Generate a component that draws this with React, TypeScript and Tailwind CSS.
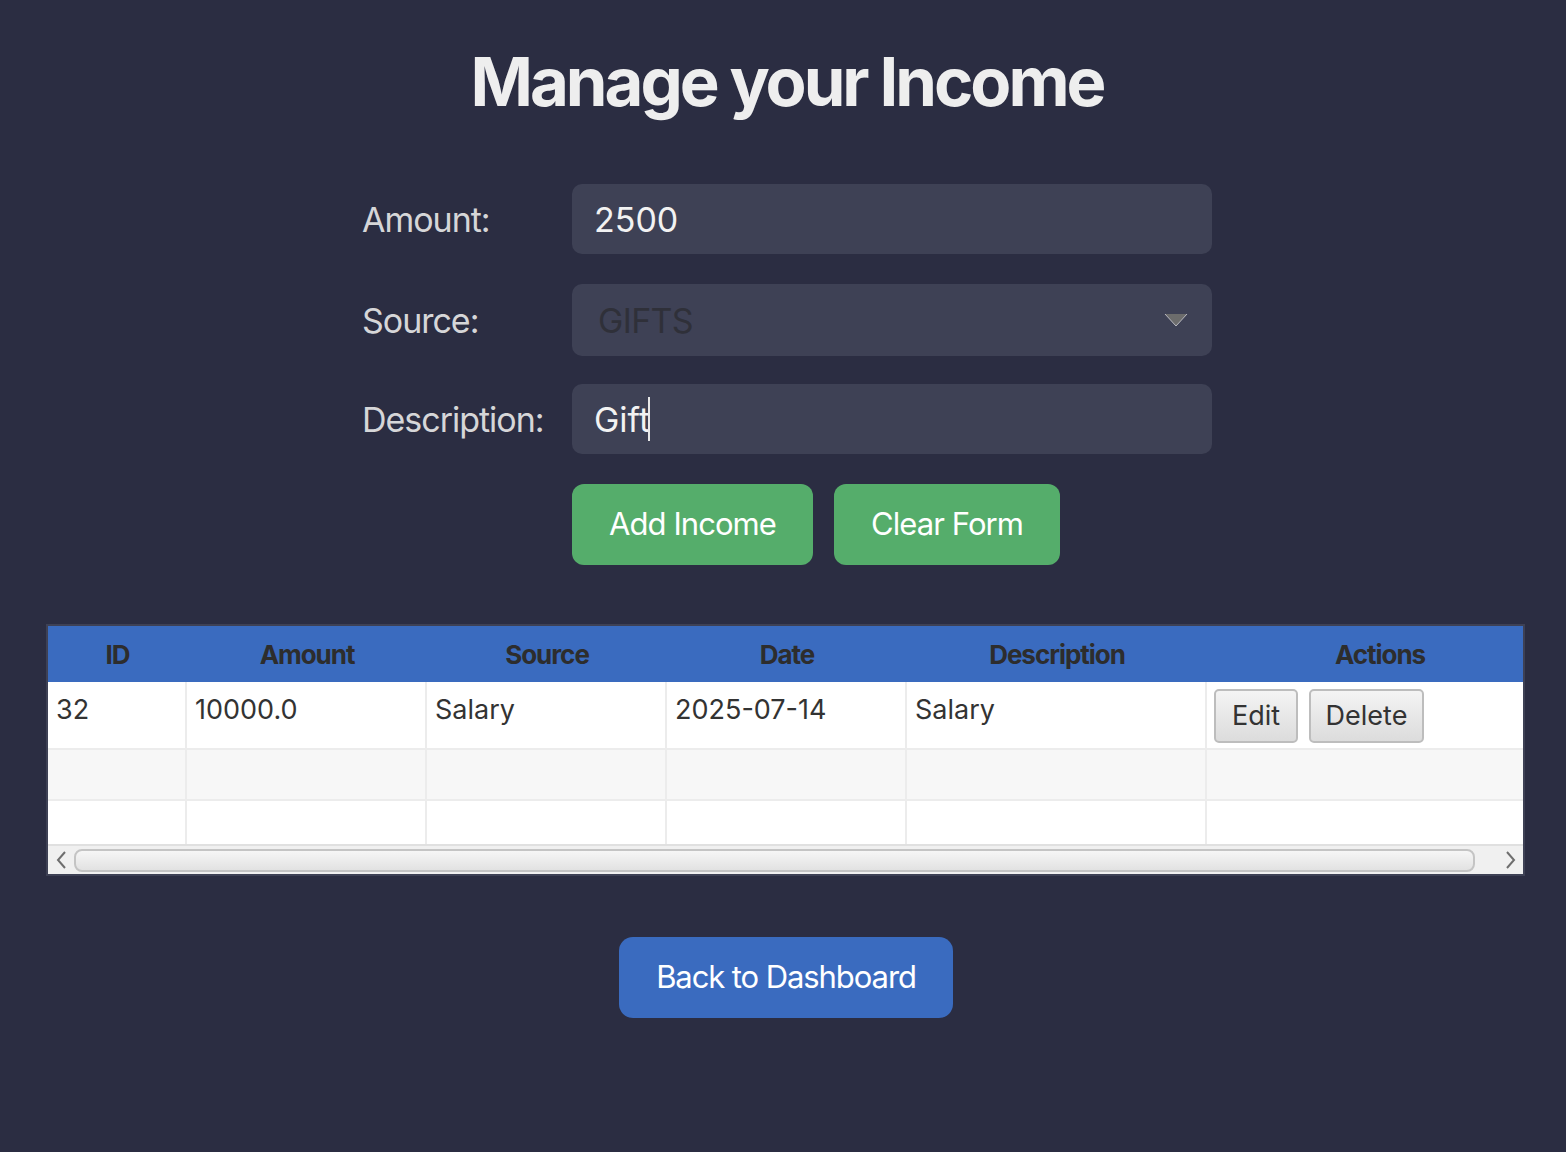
import { useState } from "react";

const columns = [
  { label: "ID", width: "w-[139px] shrink-0" },
  { label: "Amount", width: "w-[240px] shrink-0" },
  { label: "Source", width: "w-[240px] shrink-0" },
  { label: "Date", width: "w-[240px] shrink-0" },
  { label: "Description", width: "w-[300px] shrink-0" },
  { label: "Actions", width: "w-[346px] shrink-0" },
];

const rows = [["32", "10000.0", "Salary", "2025-07-14", "Salary"]];

function Field({ label, children, className = "" }: { label: string; children: React.ReactNode; className?: string }) {
  return (
    <div className={`flex items-center ${className}`}>
      <label className="w-[210px] text-[34px] tracking-[-0.03em] text-[#d6d6d8]">{label}</label>
      {children}
    </div>
  );
}

export default function App() {
  const [amount, setAmount] = useState("2500");
  const [description, setDescription] = useState("Gift");

  return (
    <div className="min-h-[1152px] bg-[#2b2d42] font-['Inter',sans-serif] pt-[42px]">
      <h1 className="text-center text-[67px] leading-[80px] font-bold tracking-[-0.045em] text-[#eeeeee] pl-[8px]">
        Manage your Income
      </h1>

      <div className="mx-auto mt-[62px] flex w-[850px] flex-col gap-[30px] pl-[8px] box-content">
        <Field label="Amount:">
          <input
            value={amount}
            onChange={(e) => setAmount(e.target.value)}
            className="h-[70px] w-[640px] rounded-[10px] bg-[#3e4155] px-[22px] text-[34px] text-[#f2f2f2] outline-none"
          />
        </Field>
        <Field label="Source:" className="-mb-[2px]">
          <div className="flex h-[72px] w-[640px] items-center justify-between rounded-[10px] bg-[#3e4155] pl-[26px] pr-[24px]">
            <span className="text-[34px] tracking-[-0.02em] text-[#2f3039]">GIFTS</span>
            <svg width="24" height="14" viewBox="0 0 24 14">
              <path d="M1 1 L23 1 L12 13 Z" fill="#6c6c6c" />
              <path d="M1 1 L12 13 L23 1" fill="none" stroke="#b8b8c0" strokeWidth="1" />
            </svg>
          </div>
        </Field>
        <Field label="Description:">
          <div className="flex h-[70px] w-[640px] items-center rounded-[10px] bg-[#3e4155] px-[22px]">
            <input
              value={description}
              onChange={(e) => setDescription(e.target.value)}
              className="w-[54px] bg-transparent text-[34px] text-[#f2f2f2] outline-none"
            />
            <span className="h-[44px] w-[2px] bg-[#e8e8e8]" />
          </div>
        </Field>
        <div className="flex gap-[21px] pl-[210px]">
          <button className="h-[81px] w-[241px] rounded-[12px] bg-[#55ad6b] text-[31px] tracking-[-0.03em] text-white">
            Add Income
          </button>
          <button className="h-[81px] w-[226px] rounded-[12px] bg-[#55ad6b] text-[31px] tracking-[-0.03em] text-white">
            Clear Form
          </button>
        </div>
      </div>

      <div className="ml-[46px] mt-[59px] w-[1479px] overflow-hidden border-2 border-[#3e4155] bg-white">
        <div className="flex h-[56px] items-center bg-[#3a6bbf]">
          {columns.map((c) => (
            <div
              key={c.label}
              className={`${c.width} text-center text-[26px] font-bold tracking-[-0.04em] text-[#2d2d2d]`}
            >
              {c.label}
            </div>
          ))}
        </div>

        {rows.map((r) => (
          <div key={r[0]} className="flex h-[68px] border-b-2 border-[#ececec]">
            {r.map((v, i) => (
              <div
                key={i}
                className={`${columns[i].width} border-r-2 border-[#ececec] px-[8px] pt-[8px] text-[27px] text-[#333333]`}
              >
                {v}
              </div>
            ))}
            <div className="flex flex-1 items-start gap-[11px] pl-[7px] pt-[7px]">
              <button className="h-[54px] w-[84px] rounded-[5px] border-2 border-[#bdbdbd] bg-gradient-to-b from-[#f4f4f4] to-[#dcdcdc] text-[27px] text-[#333333]">
                Edit
              </button>
              <button className="h-[54px] w-[115px] rounded-[5px] border-2 border-[#bdbdbd] bg-gradient-to-b from-[#f4f4f4] to-[#dcdcdc] text-[27px] text-[#333333]">
                Delete
              </button>
            </div>
          </div>
        ))}

        <div className="flex h-[51px] border-b-2 border-[#ececec] bg-[#f7f7f7]">
          {columns.map((c, i) => (
            <div key={i} className={`${c.width} ${i < 5 ? "border-r-2 border-[#ececec]" : ""}`} />
          ))}
        </div>
        <div className="flex h-[43px] bg-white">
          {columns.map((c, i) => (
            <div key={i} className={`${c.width} ${i < 5 ? "border-r-2 border-[#ececec]" : ""}`} />
          ))}
        </div>

        <div className="flex h-[30px] items-center border-t-2 border-[#e0e0e0] bg-[#f0f0f0]">
          <div className="flex w-[26px] shrink-0 justify-center">
            <svg width="12" height="20" viewBox="0 0 12 20">
              <path d="M10 2 L3 10 L10 18" fill="none" stroke="#6e6e6e" strokeWidth="2" />
            </svg>
          </div>
          <div className="h-[23px] w-[1401px] shrink-0 rounded-[8px] border-2 border-[#c4c4c4] bg-gradient-to-b from-[#f6f6f6] to-[#e2e2e2]" />
          <div className="flex flex-1 justify-end pr-[6px]">
            <svg width="12" height="20" viewBox="0 0 12 20">
              <path d="M2 2 L9 10 L2 18" fill="none" stroke="#6e6e6e" strokeWidth="2" />
            </svg>
          </div>
        </div>
      </div>

      <div className="mt-[61px] flex justify-center pl-[6px]">
        <button className="h-[81px] w-[334px] rounded-[14px] bg-[#3a6bbf] text-[31px] tracking-[-0.035em] text-white">
          Back to Dashboard
        </button>
      </div>
    </div>
  );
}
